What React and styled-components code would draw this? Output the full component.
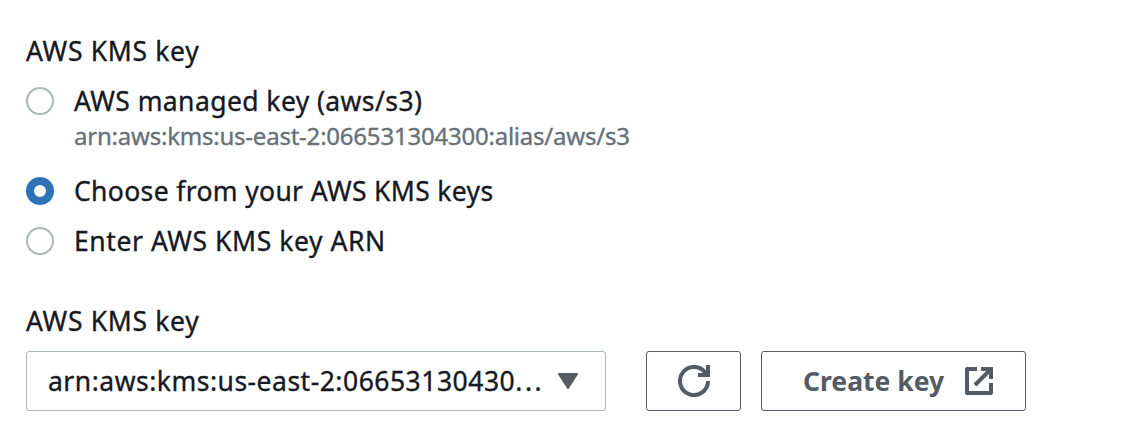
import React, { useState } from "react";
import styled, { createGlobalStyle } from "styled-components";

const GlobalStyle = createGlobalStyle`
  * { box-sizing: border-box; }
  body {
    margin: 0;
    background: #fff;
    color: #16191f;
    font-family: "Amazon Ember", "Noto Sans", "Open Sans", sans-serif;
    font-size: 26.5px;
    line-height: 40px;
  }
`;

const Form = styled.main`
  display: flex;
  flex-direction: column;
  gap: 40px;
  padding: 31px 26px 0;
`;

const Field = styled.section`
  display: flex;
  flex-direction: column;
  gap: 10px;
`;

const Text = styled.span`
  display: block;
  white-space: nowrap;
  font-weight: ${(p) => p.$weight || 400};
  letter-spacing: ${(p) => p.$tracking || 0}px;
  -webkit-text-stroke: ${(p) => (p.$weight ? 0 : 0.35)}px currentColor;
`;

const Description = styled(Text)`
  color: #687078;
  font-size: 24px;
  line-height: 30px;
`;

const RadioList = styled.div`
  display: flex;
  flex-direction: column;
  gap: 10px;
`;

const Option = styled.div`
  display: flex;
  align-items: flex-start;
  gap: 20px;
  padding-bottom: ${(p) => (p.$described ? 10 : 0)}px;
`;

const Radio = styled.button`
  flex: none;
  width: 28px;
  height: 28px;
  margin: 6px 0;
  padding: 0;
  border: ${(p) => (p.$checked ? "8px solid #2e73b8" : "2px solid #aab7b8")};
  border-radius: 50%;
  background: #fff;
`;

const Controls = styled.div`
  display: flex;
`;

const Select = styled.div`
  display: flex;
  align-items: center;
  justify-content: space-between;
  width: 580px;
  height: 60px;
  padding: 0 27px 0 21px;
  border: 1px solid #aab7b8;
  border-radius: 3px;
`;

const Value = styled.div`
  display: flex;
`;

const Button = styled.button`
  display: flex;
  align-items: center;
  justify-content: ${(p) => (p.$iconOnly ? "center" : "space-between")};
  width: ${(p) => (p.$iconOnly ? 95 : 265)}px;
  height: 60px;
  margin-left: ${(p) => (p.$iconOnly ? 40 : 20)}px;
  padding: ${(p) => (p.$iconOnly ? 0 : "0 32px 0 41px")};
  border: 1px solid #545b64;
  border-radius: 3px;
  background: #fff;
  color: #545b64;
  font: inherit;
`;

const CaretIcon = () => (
  <svg width="20" height="16" viewBox="0 0 20 16">
    <path d="M1 1H19L10 15Z" fill="#545b64" stroke="#545b64" strokeWidth="2" strokeLinejoin="round" />
  </svg>
);

const RefreshIcon = () => (
  <svg width="32" height="32" viewBox="0 0 32 32" fill="none" stroke="currentColor" strokeWidth="4">
    <path d="M30 16A14 14 0 1 1 28.3 9.3" />
    <path d="M20 10H30V0" />
  </svg>
);

const ExternalIcon = () => (
  <svg width="28" height="28" viewBox="0 0 28 28" fill="none" stroke="currentColor" strokeWidth="4">
    <path d="M12 2H2V26H26V16" strokeLinejoin="round" />
    <path d="M16 2H26V12M26 2L10 18" />
  </svg>
);

const OPTIONS = [
  {
    label: "AWS managed key (aws/s3)",
    description: "arn:aws:kms:us-east-2:066531304300:alias/aws/s3",
    tracking: 0.42,
  },
  { label: "Choose from your AWS KMS keys", tracking: 0.35 },
  { label: "Enter AWS KMS key ARN", tracking: 0.57 },
];

export default function App() {
  const [selected, setSelected] = useState(1);
  return (
    <>
      <GlobalStyle />
      <Form>
        <Field>
          <Text $tracking={0.68}>AWS KMS key</Text>
          <RadioList role="radiogroup" aria-label="AWS KMS key">
            {OPTIONS.map((option, i) => (
              <Option key={option.label} $described={!!option.description}>
                <Radio
                  role="radio"
                  aria-checked={selected === i}
                  aria-label={option.label}
                  $checked={selected === i}
                  onClick={() => setSelected(i)}
                />
                <div>
                  <Text $tracking={option.tracking}>{option.label}</Text>
                  {option.description && (
                    <Description $tracking={-0.22}>{option.description}</Description>
                  )}
                </div>
              </Option>
            ))}
          </RadioList>
        </Field>
        <Field>
          <Text $tracking={0.68}>AWS KMS key</Text>
          <Controls>
            <Select>
              <Value>
                <Text $tracking={0.5}>arn:aws:kms:us-east-2:06653130430</Text>
                <Text $tracking={2.6}>...</Text>
              </Value>
              <CaretIcon />
            </Select>
            <Button $iconOnly aria-label="Refresh keys">
              <RefreshIcon />
            </Button>
            <Button>
              <Text $weight={700}>Create key</Text>
              <ExternalIcon />
            </Button>
          </Controls>
        </Field>
      </Form>
    </>
  );
}
